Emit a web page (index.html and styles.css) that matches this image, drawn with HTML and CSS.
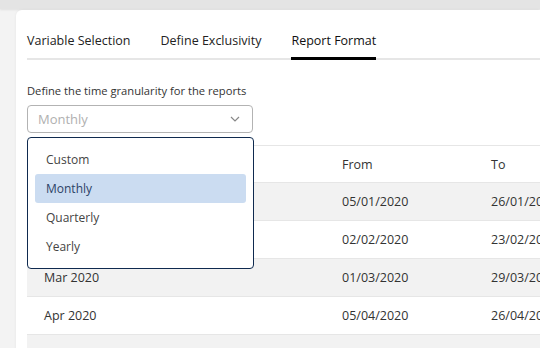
FILE: index.html
```html
<!DOCTYPE html>
<html lang="en">
<head>
  <meta charset="UTF-8">
  <title>Report Format</title>
  <link rel="stylesheet" href="styles.css">
</head>
<body>
  <div class="topbar"></div>
  <div class="card">
    <nav class="tabs">
      <div class="tab">Variable Selection</div>
      <div class="tab">Define Exclusivity</div>
      <div class="tab active">Report Format</div>
    </nav>

    <div class="field">
      <label class="field-label">Define the time granularity for the reports</label>
      <div class="select-wrap">
        <div class="select">
          <span class="placeholder">Monthly</span>
          <svg class="chevron" width="10" height="6" viewBox="0 0 10 6">
            <path d="M1 1 L5 5 L9 1" fill="none" stroke="#888" stroke-width="1.2"/>
          </svg>
        </div>
        <ul class="menu">
          <li>Custom</li>
          <li class="selected">Monthly</li>
          <li>Quarterly</li>
          <li>Yearly</li>
        </ul>
      </div>
    </div>

    <table class="periods">
      <thead>
        <tr><th>Period</th><th>From</th><th>To</th></tr>
      </thead>
      <tbody>
        <tr><td>Jan 2020</td><td>05/01/2020</td><td>26/01/2020</td></tr>
        <tr><td>Feb 2020</td><td>02/02/2020</td><td>23/02/2020</td></tr>
        <tr><td>Mar 2020</td><td>01/03/2020</td><td>29/03/2020</td></tr>
        <tr><td>Apr 2020</td><td>05/04/2020</td><td>26/04/2020</td></tr>
        <tr><td>May 2020</td><td>03/05/2020</td><td>31/05/2020</td></tr>
      </tbody>
    </table>
  </div>
</body>
</html>
```

FILE: styles.css
```css
body {
  margin: 0;
  font-family: "Open Sans", Arial, sans-serif;
  background: #f3f3f3;
  color: #222;
  overflow: hidden;
}
.topbar {
  height: 9px;
  background: #e4e4e4;
  box-shadow: 0 1px 2px rgba(0, 0, 0, 0.08);
}
.card {
  margin: 1px 0 0 16px;
  background: white;
  border-top-left-radius: 6px;
  padding: 0 0 0 11px;
  height: 340px;
  overflow: hidden;
  box-shadow: 0 0 3px rgba(0, 0, 0, 0.06);
}
.tabs {
  display: flex;
  gap: 30px;
  border-bottom: 2px solid #e6e6e6;
  padding-top: 22px;
}
.tab {
  font-size: 12.5px;
  line-height: 18px;
  padding-bottom: 8px;
  color: #222;
}
.tab.active {
  color: #111;
  box-shadow: inset 0 -3px 0 #000;
  margin-bottom: -2px;
  padding-bottom: 10px;
}
.field {
  padding-top: 23px;
  position: relative;
  z-index: 2;
}
.field-label {
  display: block;
  font-size: 11.2px;
  line-height: 15px;
  color: #333;
  margin-bottom: 7px;
}
.select-wrap {
  position: relative;
  width: 226px;
}
.select {
  height: 26px;
  border: 1px solid #b3b3b3;
  border-radius: 4px;
  display: flex;
  align-items: center;
  justify-content: space-between;
  padding: 0 12px 0 10px;
}
.placeholder {
  font-size: 13px;
  color: #b0b0b0;
}
.menu {
  position: absolute;
  top: 32px;
  left: 0;
  width: 211px;
  margin: 0;
  padding: 7px;
  list-style: none;
  background: white;
  border: 1px solid #0f2a4f;
  border-radius: 4px;
}
.menu li {
  font-size: 12px;
  line-height: 29px;
  padding-left: 11px;
  color: #444;
  border-radius: 3px;
}
.menu li.selected {
  background: #cbdcf1;
  color: #2b4266;
}
.periods {
  border-collapse: collapse;
  margin-top: 12px;
  width: 560px;
  font-size: 12.5px;
  color: #333;
}
.periods th,
.periods td {
  text-align: left;
  font-weight: normal;
  height: 37px;
  padding: 0 17px;
  border-top: 1px solid #e6e6e6;
  white-space: nowrap;
}
.periods th {
  height: 36px;
}
.periods th:first-child,
.periods td:first-child {
  width: 264px;
}
.periods th:nth-child(2),
.periods td:nth-child(2) {
  width: 115px;
}
.periods tbody tr:nth-child(odd) {
  background: #f2f2f2;
}
```
